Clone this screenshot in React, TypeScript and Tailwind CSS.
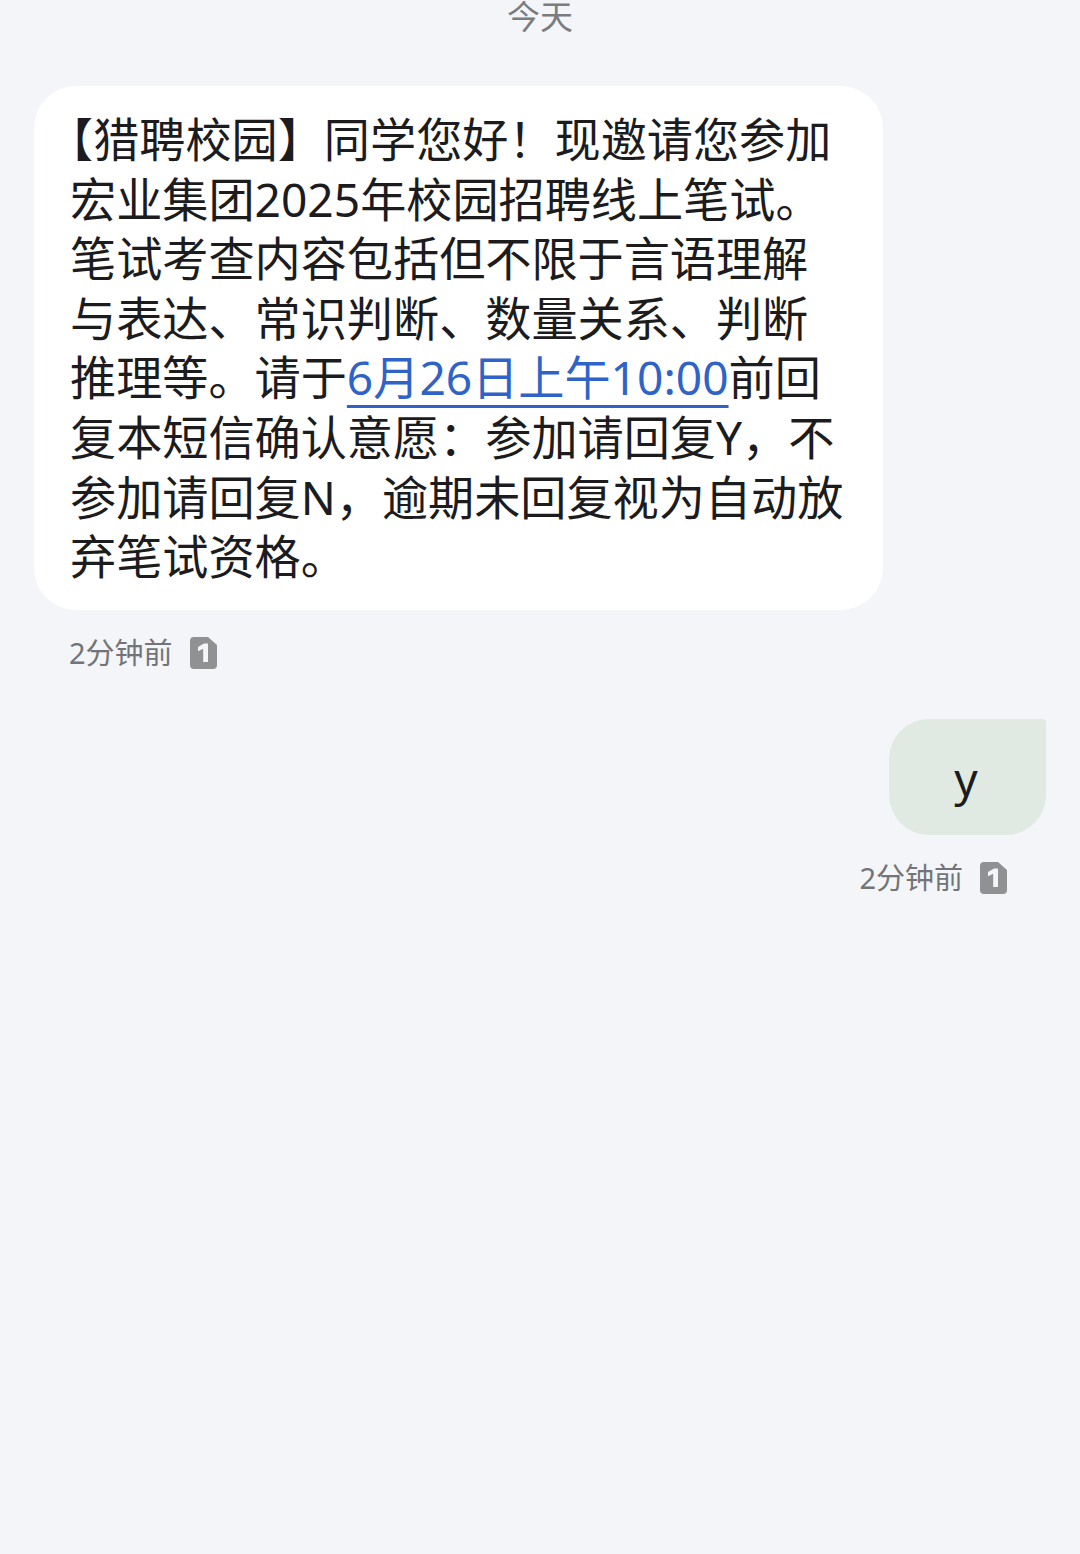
const lines = [
  '宏业集团2025年校园招聘线上笔试。',
  '笔试考查内容包括但不限于言语理解',
  '与表达、常识判断、数量关系、判断',
]

function SimBadge() {
  return (
    <svg width="27" height="32" viewBox="0 0 27 32" className="shrink-0">
      <path d="M4 0H18L27 8V28a4 4 0 0 1-4 4H4a4 4 0 0 1-4-4V4a4 4 0 0 1 4-4Z" fill="#8f9193" />
      <path d="M8 10L14 6.5H18V25H13.2V11.8L8 14.2Z" fill="#f3f5f8" />
    </svg>
  )
}

function Meta() {
  return (
    <div className="flex items-center gap-[17px] h-[32px]">
      <span className="text-[29px] leading-[32px] text-[#727477]">2分钟前</span>
      <SimBadge />
    </div>
  )
}

export default function App() {
  return (
    <div
      className="w-[1080px] h-[1554px] overflow-hidden bg-[#f3f5f8] flex flex-col"
      style={{ fontFamily: '"Noto Sans", "Noto Sans CJK SC", sans-serif' }}
    >
      <div className="text-center text-[33px] leading-[34px] text-[#7a7c7f]">今天</div>

      <div className="mt-[52px] ml-[34px] w-[849px] h-[524px] bg-white rounded-[42px] pl-[36px] pt-[24px] text-[46.15px] leading-[59.6px] text-[#1c1c1e] whitespace-nowrap">
        <div className="-ml-[23px]">【猎聘校园】同学您好！现邀请您参加</div>
        {lines.map(line => (
          <div key={line}>{line}</div>
        ))}
        <div>
          推理等。请于
          <span className="text-[#2f63c8] underline decoration-[3px] underline-offset-[10px]">6月26日上午10:00</span>
          前回
        </div>
        <div>复本短信确认意愿：参加请回复Y，不</div>
        <div>参加请回复N，逾期未回复视为自动放</div>
        <div>弃笔试资格。</div>
      </div>

      <div className="mt-[27px] ml-[69px]">
        <Meta />
      </div>

      <div className="mt-[50px] self-end mr-[34px] w-[157px] h-[116px] bg-[#e1eae2] rounded-[40px] rounded-tr-[4px] flex items-center justify-center pr-[3px] pt-[3px] text-[46px] text-[#1c1c1e]">
        y
      </div>

      <div className="mt-[27px] self-end mr-[73px]">
        <Meta />
      </div>
    </div>
  )
}
